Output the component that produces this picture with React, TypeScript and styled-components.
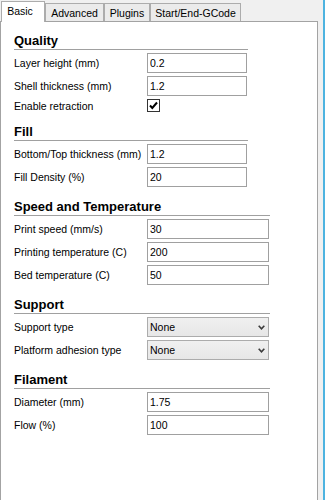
import * as React from 'react';
import styled, { createGlobalStyle } from 'styled-components';

const GlobalStyle = createGlobalStyle`
    html, body {
        margin: 0;
        padding: 0;
        background: #f0f0f0;
    }
    body {
        font-family: "Liberation Sans", Arial, sans-serif;
        font-size: 10.5px;
        color: #000;
    }
`;

const Window = styled.div`
    display: flex;
    width: 325px;
    height: 500px;
    overflow: hidden;
    background: #f0f0f0;
`;

const Notebook = styled.div`
    display: flex;
    flex-direction: column;
    width: 318px;
`;

const FrameGap = styled.div`
    width: 5px;
    background: #f0f0f0;
`;

const AccentEdge = styled.div`
    width: 2px;
    background: #4db3e0;
`;

const TabBar = styled.div`
    display: flex;
    align-items: flex-end;
    height: 21px;
    padding-left: 1px;
`;

const Tab = styled.div<{ $width: number; $active?: boolean }>`
    box-sizing: border-box;
    display: flex;
    align-items: center;
    justify-content: center;
    width: ${p => p.$width}px;
    height: ${p => (p.$active ? 21 : 18)}px;
    border: 1px solid #acacac;
    border-bottom: none;
    background: ${p => (p.$active ? '#fff' : '#ebebeb')};
    padding: ${p => (p.$active ? '0 6px 2px 0' : '1px 0 0 0')};
    margin-bottom: ${p => (p.$active ? -1 : 0)}px;
    position: relative;
    z-index: ${p => (p.$active ? 1 : 0)};
    white-space: nowrap;
`;

const Panel = styled.div`
    flex: 1;
    background: #fff;
    border: 1px solid #a3a3a3;
    border-bottom: none;
    padding: 11px 0 0 13px;
`;

const Section = styled.section<{ $w: number }>`
    display: grid;
    grid-template-columns: 133px ${p => p.$w}px 1px;
    row-gap: 3px;
    & + & {
        margin-top: 12px;
    }
`;

const Heading = styled.h2`
    grid-column: 1 / -1;
    margin: 0;
    font-size: 13px;
    line-height: 16px;
    font-weight: bold;
    border-bottom: 1px solid #a0a0a0;
`;

const Label = styled.div`
    grid-column: 1;
    align-self: center;
    white-space: nowrap;
`;

const TextInput = styled.input`
    grid-column: 2;
    box-sizing: border-box;
    width: 100%;
    height: 20px;
    margin: 0;
    padding: 0 2px;
    border: 1px solid #a0a0a0;
    border-radius: 0;
    outline: none;
    font: inherit;
    color: #000;
    background: #fff;
`;

const ComboBox = styled.div`
    grid-column: 2;
    box-sizing: border-box;
    display: flex;
    align-items: center;
    justify-content: space-between;
    height: 20px;
    padding: 0 3px 0 2px;
    border: 1px solid #acacac;
    background: linear-gradient(#f0f0f0, #e7e7e7);
`;

const CheckBox = styled.div`
    grid-column: 2;
    box-sizing: border-box;
    display: flex;
    align-items: center;
    justify-content: center;
    width: 13px;
    height: 13px;
    border: 1px solid #333;
    background: #fff;
`;

type Row =
    | { kind: 'text'; label: string; value: string }
    | { kind: 'select'; label: string; value: string }
    | { kind: 'check'; label: string };

interface SectionDef {
    title: string;
    width: number;
    rows: Row[];
}

const sections: SectionDef[] = [
    {
        title: 'Quality',
        width: 100,
        rows: [
            { kind: 'text', label: 'Layer height (mm)', value: '0.2' },
            { kind: 'text', label: 'Shell thickness (mm)', value: '1.2' },
            { kind: 'check', label: 'Enable retraction' },
        ],
    },
    {
        title: 'Fill',
        width: 100,
        rows: [
            { kind: 'text', label: 'Bottom/Top thickness (mm)', value: '1.2' },
            { kind: 'text', label: 'Fill Density (%)', value: '20' },
        ],
    },
    {
        title: 'Speed and Temperature',
        width: 122,
        rows: [
            { kind: 'text', label: 'Print speed (mm/s)', value: '30' },
            { kind: 'text', label: 'Printing temperature (C)', value: '200' },
            { kind: 'text', label: 'Bed temperature (C)', value: '50' },
        ],
    },
    {
        title: 'Support',
        width: 122,
        rows: [
            { kind: 'select', label: 'Support type', value: 'None' },
            { kind: 'select', label: 'Platform adhesion type', value: 'None' },
        ],
    },
    {
        title: 'Filament',
        width: 122,
        rows: [
            { kind: 'text', label: 'Diameter (mm)', value: '1.75' },
            { kind: 'text', label: 'Flow (%)', value: '100' },
        ],
    },
];

const tabs = [
    { name: 'Basic', width: 44 },
    { name: 'Advanced', width: 59 },
    { name: 'Plugins', width: 46 },
    { name: 'Start/End-GCode', width: 91 },
];

function Chevron() {
    return (
        <svg width="7" height="5" viewBox="0 0 7 5">
            <polyline points="0.7,0.7 3.5,3.8 6.3,0.7" fill="none" stroke="#3c3c3c" strokeWidth="1.6" />
        </svg>
    );
}

function CheckMark() {
    return (
        <svg width="9" height="9" viewBox="0 0 9 9">
            <polyline points="1,4.5 3.3,7 8,1.5" fill="none" stroke="#000" strokeWidth="2" />
        </svg>
    );
}

function renderControl(row: Row) {
    if (row.kind === 'text') {
        return <TextInput readOnly value={row.value} />;
    }
    if (row.kind === 'select') {
        return (
            <ComboBox>
                <span>{row.value}</span>
                <Chevron />
            </ComboBox>
        );
    }
    return (
        <CheckBox>
            <CheckMark />
        </CheckBox>
    );
}

export default function App() {
    return (
        <Window>
            <GlobalStyle />
            <Notebook>
                <TabBar>
                    {tabs.map((t, i) => (
                        <Tab key={t.name} $width={t.width} $active={i === 0}>
                            {t.name}
                        </Tab>
                    ))}
                </TabBar>
                <Panel>
                    {sections.map(s => (
                        <Section key={s.title} $w={s.width}>
                            <Heading>{s.title}</Heading>
                            {s.rows.map(r => (
                                <React.Fragment key={r.label}>
                                    <Label>{r.label}</Label>
                                    {renderControl(r)}
                                </React.Fragment>
                            ))}
                        </Section>
                    ))}
                </Panel>
            </Notebook>
            <FrameGap />
            <AccentEdge />
        </Window>
    );
}
